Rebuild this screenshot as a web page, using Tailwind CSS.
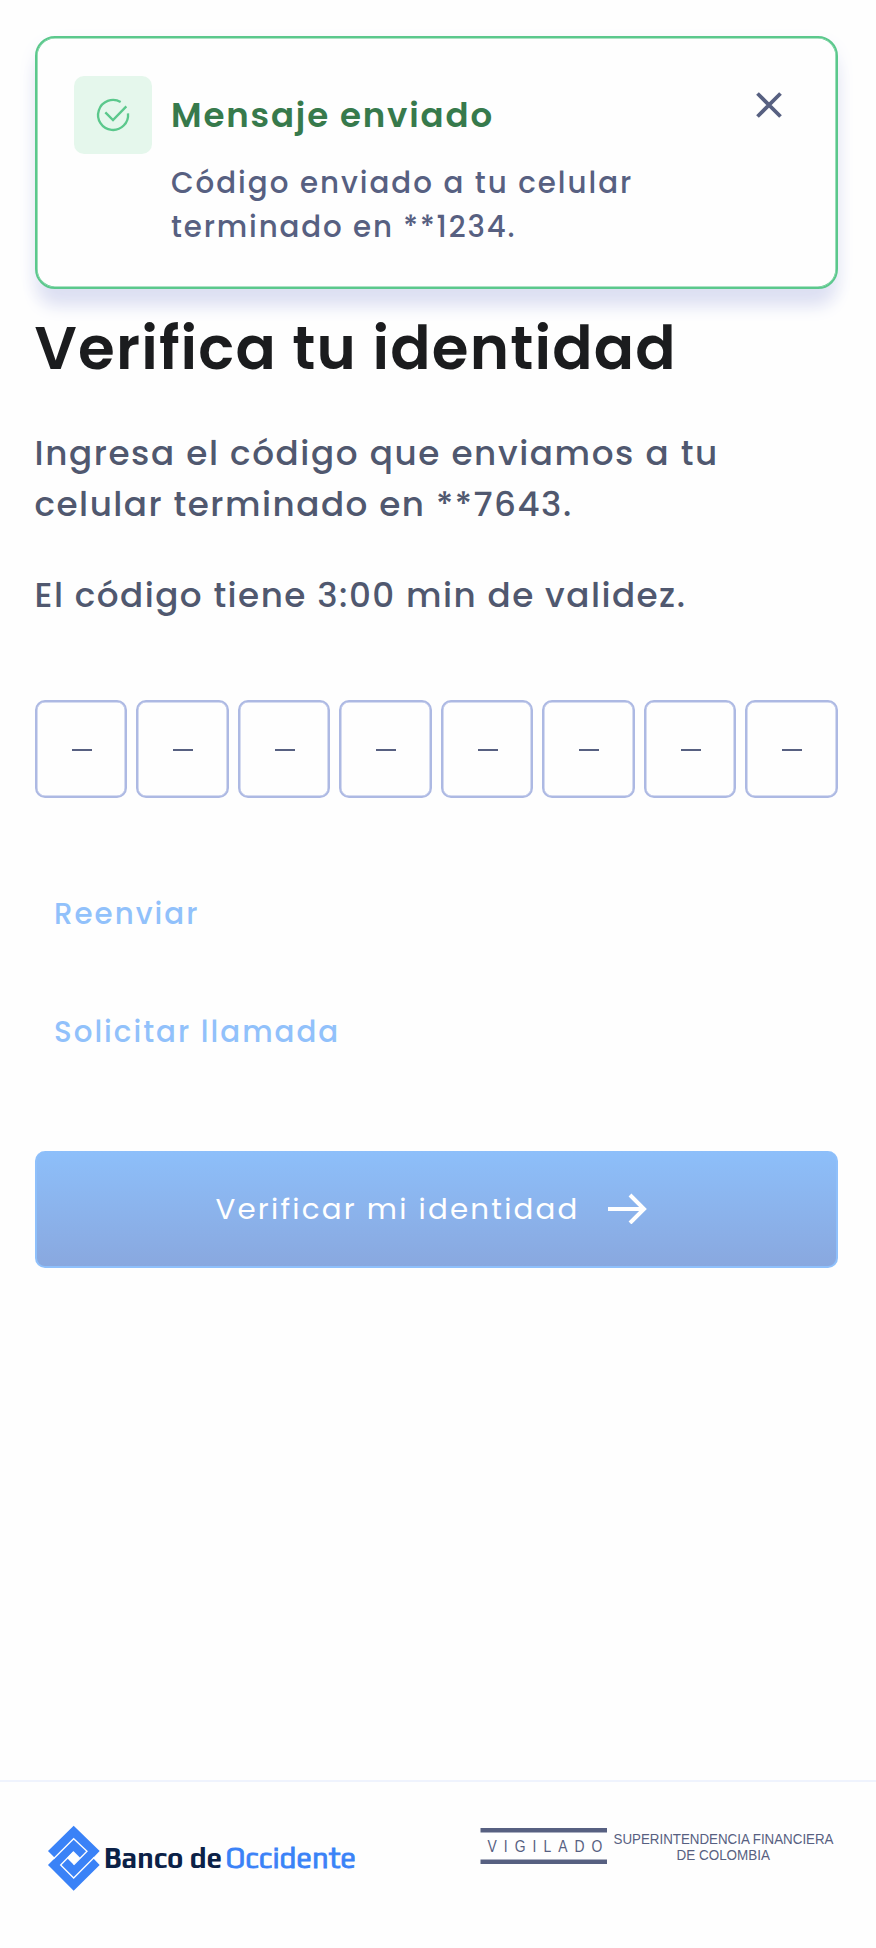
<!DOCTYPE html>
<html lang="es">
<head>
<meta charset="utf-8">
<title>Verifica tu identidad</title>
<script src="https://cdn.jsdelivr.net/npm/@tailwindcss/browser@4"></script>
</head>
<body class="flex h-[1948px] w-[876px] flex-col overflow-hidden bg-[#fefefe] font-['Poppins','Inter',sans-serif]">
<main class="flex flex-col pl-[34.5px] pr-[38.5px] pt-9">
  <section class="flex h-[253px] rounded-[20px] border-2 border-[#5bc88c] bg-[#fefefe] pl-[37.5px] pt-[38px] shadow-[inset_0_0_0_0.6px_#5bc88c,0_20px_18px_-4px_#dcdff2,0_8px_20px_#eff1fa]">
    <div class="flex size-[78px] shrink-0 items-center justify-center rounded-[10px] bg-[#e5f7ec]">
      <svg class="size-[50px]" viewBox="-6 0 150 150" fill="none" stroke="#5bc88c" stroke-width="7"><path d="M92 36A45 45 0 1 0 114 70M46 67L69 90L109 49"/></svg>
    </div>
    <div class="ml-[19px] flex-1 whitespace-nowrap pt-[17px]">
      <h2 class="text-[34px] leading-[44px] font-semibold tracking-[1.85px] text-[#377a4c]">Mensaje enviado</h2>
      <p class="mt-6 text-[29.3px] leading-[44px] font-medium text-[#576081]"><span class="tracking-[1.97px]">Código enviado a tu celular</span><br><span class="tracking-[1.86px]">terminado en **1234.</span></p>
    </div>
    <button class="mr-[51px] mt-[14px] size-8" aria-label="Cerrar">
      <svg class="size-8" viewBox="0 0 32 32" fill="none" stroke="#576081" stroke-width="3.8"><path d="M4.500 3.500L27.500 26.500M27.500 3.500L4.500 26.500"/></svg>
    </button>
  </section>

  <h1 class="mt-5 whitespace-nowrap text-[59.5px] leading-[80px] font-semibold tracking-[1.2px] text-[#1b1c1e]">Verifica tu identidad</h1>
  <div class="mt-[38.5px] whitespace-nowrap text-[34.2px] leading-[51.5px] font-medium text-[#50586f]">
    <p><span class="tracking-[1.6px]">Ingresa el código que enviamos a tu</span><br><span class="tracking-[1.5px]">celular terminado en **7643.</span></p>
    <p class="mt-[39px] tracking-[1.47px]">El código tiene 3:00 min de validez.</p>
  </div>

  <div class="mt-[79px] grid h-[98px] grid-cols-8 gap-[9px]">
    <div class="flex items-center justify-center rounded-[10px] border-2 border-[#adb9e3] pl-[2px] pt-[2px] shadow-[inset_0_0_0_0.5px_#adb9e3]"><i class="h-[2px] w-5 bg-[#576081]"></i></div>
    <div class="flex items-center justify-center rounded-[10px] border-2 border-[#adb9e3] pl-[2px] pt-[2px] shadow-[inset_0_0_0_0.5px_#adb9e3]"><i class="h-[2px] w-5 bg-[#576081]"></i></div>
    <div class="flex items-center justify-center rounded-[10px] border-2 border-[#adb9e3] pl-[2px] pt-[2px] shadow-[inset_0_0_0_0.5px_#adb9e3]"><i class="h-[2px] w-5 bg-[#576081]"></i></div>
    <div class="flex items-center justify-center rounded-[10px] border-2 border-[#adb9e3] pl-[2px] pt-[2px] shadow-[inset_0_0_0_0.5px_#adb9e3]"><i class="h-[2px] w-5 bg-[#576081]"></i></div>
    <div class="flex items-center justify-center rounded-[10px] border-2 border-[#adb9e3] pl-[2px] pt-[2px] shadow-[inset_0_0_0_0.5px_#adb9e3]"><i class="h-[2px] w-5 bg-[#576081]"></i></div>
    <div class="flex items-center justify-center rounded-[10px] border-2 border-[#adb9e3] pl-[2px] pt-[2px] shadow-[inset_0_0_0_0.5px_#adb9e3]"><i class="h-[2px] w-5 bg-[#576081]"></i></div>
    <div class="flex items-center justify-center rounded-[10px] border-2 border-[#adb9e3] pl-[2px] pt-[2px] shadow-[inset_0_0_0_0.5px_#adb9e3]"><i class="h-[2px] w-5 bg-[#576081]"></i></div>
    <div class="flex items-center justify-center rounded-[10px] border-2 border-[#adb9e3] pl-[2px] pt-[2px] shadow-[inset_0_0_0_0.5px_#adb9e3]"><i class="h-[2px] w-5 bg-[#576081]"></i></div>
  </div>

  <div class="mt-24 flex flex-col items-start gap-[77.5px] pl-[19.5px] text-[29.3px] leading-10 font-medium tracking-[2px] text-[#91c1fb]">
    <a>Reenviar</a>
    <a>Solicitar llamada</a>
  </div>

  <button class="mt-[99px] flex h-[117.5px] items-center rounded-[10px] border-2 border-t-0 border-[#8fc0fb] bg-gradient-to-b from-[#8dbffa] to-[#89a8df] pl-[179px] text-[29.3px] leading-10 tracking-[2.2px] text-white">
    <span class="whitespace-nowrap pt-[2px]">Verificar mi identidad</span>
    <svg class="ml-auto mr-[187px] h-8 w-[42px] shrink-0" viewBox="0 0 42 32" fill="none" stroke="#fff" stroke-width="4"><path d="M1 17H38M23 3L37 17L23 31"/></svg>
  </button>
</main>

<footer class="mt-auto flex h-[168px] items-start border-t-2 border-[#eff3fd]">
  <svg class="ml-[44px] mt-[38px] h-[80px] w-[320px]" viewBox="44 1820 320 80" aria-label="Banco de Occidente">
    <g transform="translate(30 1770) scale(.33333)">
      <path fill="#3a82f7" d="M131 167L209 243L189 264L209 285L131 362L54 285L75 264L54 243Z"/>
      <path fill="none" stroke="#fefefe" stroke-width="4" d="M70 267L131 206L171 244L131 284M193 262L131 324L92 285L131 245"/>
      <path fill="#fefefe" d="M131 244L151 264L131 284L111 264Z"/>
    </g>
    <g font-family="Play" font-size="30">
      <text x="104" y="1868" fill="#0b2147" font-weight="700" textLength="118" lengthAdjust="spacingAndGlyphs">Banco de</text>
      <text x="225.500" y="1868" fill="#3a82f7" stroke="#3a82f7" stroke-width=".8" font-weight="400" textLength="130.500" lengthAdjust="spacingAndGlyphs">Occidente</text>
    </g>
  </svg>
  <svg class="ml-[112px] mt-[38px] h-[60px] w-[360px] overflow-visible" viewBox="476 1820 360 60" fill="#576081" font-family="Liberation Sans">
    <path d="M480.500 1828H607V1832.500H480.500ZM480.500 1859.500H607V1864H480.500Z"/>
    <text transform="translate(487.500 1852) scale(.88 1)" font-size="15.800" letter-spacing="8">VIGILADO</text>
    <text x="613.500" y="1844" font-size="15.500" textLength="220" lengthAdjust="spacingAndGlyphs">SUPERINTENDENCIA FINANCIERA</text>
    <text x="676.500" y="1859.500" font-size="15.500" textLength="93.500" lengthAdjust="spacingAndGlyphs">DE COLOMBIA</text>
  </svg>
</footer>
</body>
</html>
